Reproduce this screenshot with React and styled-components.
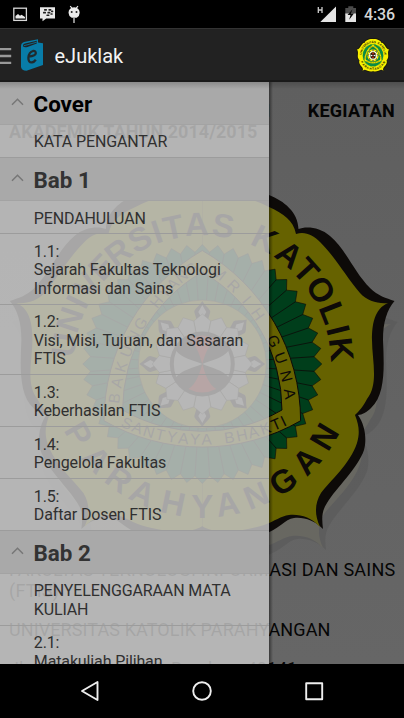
import React from "react";
import styled, { createGlobalStyle } from "styled-components";

const GlobalStyle = createGlobalStyle`
  html, body { margin: 0; padding: 0; background: #000; }
  * { box-sizing: border-box; }
`;

const Screen = styled.div`
  width: 404px;
  height: 718px;
  display: flex;
  flex-direction: column;
  overflow: hidden;
  background: #000;
  font-family: Roboto, "Liberation Sans", sans-serif;
`;

const StatusBar = styled.header`
  height: 28px;
  flex: none;
  display: flex;
  align-items: flex-start;
  justify-content: space-between;
`;

const Clock = styled.span`
  font-size: 16px;
  font-weight: 500;
  line-height: 28px;
  color: #d6d6d6;
  padding: 1px 9px 0 8px;
  letter-spacing: -0.1px;
`;

const StatusGroup = styled.div`
  display: flex;
`;

const AppBar = styled.div`
  height: 54px;
  flex: none;
  display: flex;
  align-items: center;
  background: #222;
  border-top: 1px solid #333;
  border-bottom: 2px solid #1a1a1a;
  padding-right: 14px;
`;

const Title = styled.h1`
  flex: 1;
  margin: 0;
  padding: 3px 0 0 9.5px;
  font-size: 20px;
  font-weight: 400;
  line-height: 24px;
  color: #f3f3f3;
`;

const Content = styled.main`
  position: relative;
  height: 582px;
  flex: none;
  overflow: hidden;
  background: linear-gradient(#5f5f5f, #666);
`;

const Watermark = styled.svg`
  position: absolute;
  left: 0;
  top: 0;
`;

const Document = styled.article`
  position: relative;
  padding: 18px 9px 0;
  color: #050505;
  font-size: 18px;
  line-height: 21px;
`;

const Heading = styled.div`
  font-weight: 700;
  height: 439px;
  letter-spacing: 0.05px;
`;

const HeadingLine = styled.div`
  display: flex;
  justify-content: space-between;
  white-space: nowrap;
  letter-spacing: 0.25px;
`;

const Paragraph = styled.p`
  margin: ${(p) => p.$gap || "20px"} 0 0;
  white-space: nowrap;
  letter-spacing: ${(p) => p.$track || "0"};
`;

const Line = styled.span`
  display: block;
`;

const Drawer = styled.nav`
  position: absolute;
  left: 0;
  top: 0;
  width: 269px;
  height: 582px;
  overflow: hidden;
`;

const DrawerEdge = styled.div`
  position: absolute;
  left: 269px;
  top: 0;
  width: 4px;
  height: 582px;
  background: linear-gradient(90deg, rgba(0, 0, 0, 0.45), rgba(0, 0, 0, 0));
`;

const TopShade = styled.div`
  position: absolute;
  left: 0;
  right: 0;
  top: 0;
  height: 7px;
  background: linear-gradient(rgba(0, 0, 0, 0.18), rgba(0, 0, 0, 0));
`;

const Group = styled.div`
  display: flex;
  align-items: center;
  height: ${(p) => p.$height}px;
  padding: 2px 0 0 10px;
  gap: 8.5px;
  background: #a9a9a9;
  border-bottom: 1px solid #a3a3a3;
  color: ${(p) => (p.$active ? "#000" : "#333")};
  font-size: 22.4px;
  font-weight: 700;
  line-height: 26px;

  svg {
    margin-top: -2px;
  }
`;

const Item = styled.div`
  height: ${(p) => p.$lines * 18.5 + 14.9}px;
  padding: 8.5px 10px 0 33.8px;
  background: rgba(197, 197, 197, 0.84);
  border-bottom: 1px solid #9c9c9c;
  color: #303030;
  font-size: 16px;
  line-height: 18.4px;
  letter-spacing: -0.13px;
  white-space: pre;
`;

const NavBar = styled.footer`
  height: 54px;
  flex: none;
  display: flex;
  justify-content: center;
  align-items: center;
`;

const OUTER =
  "M202 184C230 182 252 186 269 195C284 201 298 212 298.5 229C306 226 320 227 330 236C345 248 354 272 370 288C378 296 386 298 394.5 301C387 310 383 322 383 340C384 365 386 394 371 408C367 412 362 415 358 415C365 425 367 439 364 450C358 468 336 488 327 503C321 512 322 520 323 529C314 520 304 517 294 518C285 519 278 530 264 534C240 542 216 540 202 531Z";
const INNER =
  "M202 194C230 193 252 198 269 207C284 214 293 220 296 234C305 231 313 235 320 242C337 259 346 277 360 293C367 301 378 304 388 303C374 309 372 325 372 340C372 360 379 384 367 399C363 407 359 411 355 415C359 425 360 433 357 443C350 464 330 481 321 493C315 503 314 514 320 527C311 517 300 514 289 515C281 516 275 521 264 525C240 532 216 535 202 526Z";

const CX = 202.3;
const CY = 364;
const rad = (d) => (d * Math.PI) / 180;
const polar = (r, deg, cx = CX, cy = CY) => [
  cx + r * Math.sin(rad(deg)),
  cy - r * Math.cos(rad(deg)),
];

const TEETH = 48;
const gearPoints = Array.from({ length: TEETH * 2 }, (_, i) =>
  polar(i % 2 ? 112 : 119.5, (i * 180) / TEETH).join(",")
).join(" ");

const reuleaux = (r) => {
  const side = r * Math.sqrt(3);
  const [a, b, c] = [0, 120, 240].map((d) => polar(r, d).join(" "));
  return `M${a}A${side} ${side} 0 0 1 ${b}A${side} ${side} 0 0 1 ${c}A${side} ${side} 0 0 1 ${a}Z`;
};

const topLetters = [
  ["U", -82], ["N", -71.5], ["I", -63.5], ["V", -55.5], ["E", -46], ["R", -37],
  ["S", -26.5], ["I", -19], ["T", -12], ["A", -2.3], ["S", 8.6],
  ["K", 26.5], ["A", 38.5], ["T", 48], ["O", 58], ["L", 68.5], ["I", 76], ["K", 84],
];
const bottomLetters = [
  ["N", 120.8], ["A", 132.9], ["G", 145.4], ["N", 157.7], ["A", 169.8], ["Y", 180],
  ["H", 191.8], ["A", 204.8], ["R", 215.9], ["A", 227.8], ["P", 240.5],
];
const LEFT = [104, 421.7];
const RIGHT = [300.7, 421.7];
const TOP = [202.3, 251.7];
const rightMotto = [
  ["M", 52.2], ["R", 46.3], ["I", 40.5], ["H", 35],
  ["G", 25.4], ["U", 19.8], ["N", 14], ["A", 8.5],
];
const leftMotto = [
  ["B", 7.2], ["A", 12], ["K", 17], ["U", 22], ["N", 27], ["G", 31.5],
  ["H", 39.8], ["Y", 43.6], ["A", 47], ["N", 50.7], ["G", 54.4],
];
const bottomMotto = [
  ["S", -23.7], ["A", -20.2], ["N", -16.5], ["T", -12.9], ["Y", -9.3], ["A", -5.8], ["Y", -2.2], ["A", 1.3],
  ["B", 8.3], ["H", 12.2], ["A", 15.8], ["K", 19.6], ["T", 23.1], ["I", 25.6],
];

const Letter = ({ ch, at, turn }) => (
  <text textAnchor="middle" transform={`translate(${at[0]} ${at[1]}) rotate(${turn})`}>{ch}</text>
);

const HalfOutline = ({ outer, inner }) => (
  <>
    <path d={OUTER} fill={outer} />
    <path d={INNER} fill={inner} />
  </>
);

const Outline = (p) => (
  <>
    <HalfOutline {...p} />
    <g transform="translate(404.4 0) scale(-1 1)"><HalfOutline {...p} /></g>
  </>
);

const Emblem = ({ yellow, green, ink, white, red }) => (
  <g>
    <Outline outer={ink} inner={yellow} />
    <polygon points={gearPoints} fill={green} stroke={ink} strokeWidth="0.6" />
    {Array.from({ length: TEETH }, (_, i) => {
      const d = ((i + 0.5) * 360) / TEETH;
      const [x1, y1] = polar(60, d);
      const [x2, y2] = polar(112, d);
      return <line key={i} x1={x1} y1={y1} x2={x2} y2={y2} stroke={ink} strokeWidth="0.8" />;
    })}
    <path
      d={`${reuleaux(113.5)} ${reuleaux(92)}`}
      fillRule="evenodd"
      fill={yellow}
      stroke={ink}
      strokeWidth="1"
    />
    <circle cx={CX} cy={CY} r="64" fill={yellow} stroke={ink} strokeWidth="0.6" />
    {Array.from({ length: 8 }, (_, i) => (
      <g key={i} transform={`translate(${CX} ${CY}) rotate(${i * 45})`}>
        <path d="M0-63C3-58 8-55 8-52L5-42H-5L-8-52C-8-55-3-58 0-63Z" fill={ink} />
        <path d="M0-59L4-52L0-45L-4-52Z" fill={white} />
      </g>
    ))}
    {Array.from({ length: 16 }, (_, i) => (
      <path
        key={i}
        transform={`translate(${CX} ${CY}) rotate(${i * 22.5})`}
        d="M-6-30L-8.5-43L0-50L8.5-43L6-30Z"
        fill={white}
        stroke={ink}
        strokeWidth="0.5"
      />
    ))}
    <circle cx={CX} cy={CY} r="32.5" fill={ink} />
    <g transform={`translate(${CX} ${CY})`}>
      <path d="M0 0C-10-4-20-6-26-13Q-31 0-26 13C-20 6-10 4 0 0C10 4 20 6 26 13Q31 0 26-13C20-6 10-4 0 0Z" fill={white} />
      <path d="M0 0C-3-10-6-20-14-25Q0-32 14-25C6-20 3-10 0 0C3 10 6 20 14 25Q0 32-14 25C-6 20-3 10 0 0Z" fill={red} />
    </g>
    <g fill={ink} fontFamily='"Liberation Sans", Arial, sans-serif'>
      <g fontSize="33" fontWeight="700">
        {topLetters.map(([c, d], i) => <Letter key={i} ch={c} at={polar(128.5, d)} turn={d} />)}
        {bottomLetters.map(([c, d], i) => <Letter key={i} ch={c} at={polar(153.5, d)} turn={d - 180} />)}
      </g>
      <g fontSize="15.5">
        {rightMotto.map(([c, a], i) => <Letter key={i} ch={c} at={polar(182.5, 90 - a, ...LEFT)} turn={90 - a} />)}
        {leftMotto.map(([c, a], i) => <Letter key={i} ch={c} at={polar(182.5, a - 90, ...RIGHT)} turn={a - 90} />)}
        {bottomMotto.map(([c, a], i) => <Letter key={i} ch={c} at={polar(193, 180 - a, ...TOP)} turn={-a} />)}
      </g>
    </g>
  </g>
);

const Chevron = () => (
  <svg width="15" height="12" viewBox="0 0 15 12">
    <path d="M2 7.7L7.5 2.3L13 7.7" fill="none" stroke="#777" strokeWidth="1.5" />
  </svg>
);

const NotificationIcons = () => (
  <svg width="90" height="28" viewBox="0 0 90 28">
    <rect x="13.8" y="8.2" width="12.6" height="12.2" fill="none" stroke="#d8d8d8" strokeWidth="1.3" />
    <path d="M15.5 18.6V16L18 14l2 1.8 1.5-1L25 17v1.6Z" fill="#e8e8e8" />
    <path d="M40 7.2h15v11.2H46.2L42.5 21.2v-2.8H40Z" fill="#e8e8e8" />
    <g fill="#222">
      <rect x="44" y="9" width="3" height="1.7" rx=".6" /><rect x="48.4" y="9" width="3" height="1.7" rx=".6" />
      <rect x="43" y="11.8" width="3" height="1.7" rx=".6" /><rect x="47.4" y="11.8" width="3" height="1.7" rx=".6" />
      <rect x="51" y="10.6" width="2.3" height="1.6" rx=".6" /><rect x="50.4" y="13.2" width="2.3" height="1.6" rx=".6" />
      <rect x="46.4" y="14.5" width="3" height="1.5" rx=".6" />
    </g>
    <path d="M70.2 6.2l2 2.2M78 6.2l-2 2.2M74 18v5" stroke="#e8e8e8" strokeWidth="1.2" />
    <path d="M68.5 12.8a5.6 5.6 0 0 1 11.2 0q0 3-3 5h-5q-3.2-2-3.2-5Z" fill="#ececec" />
    <circle cx="71.7" cy="12" r="1" fill="#222" /><circle cx="76.5" cy="12" r="1" fill="#222" />
  </svg>
);

const SignalIcons = () => (
  <svg width="40" height="28" viewBox="1 0 40 28">
    <path d="M3.3 7v6M7 7v6M3.3 10H7" stroke="#ccc" strokeWidth="1.3" />
    <path d="M21 6.5V22H5.3Z" fill="#e4e4e4" />
    <path d="M30.3 8h3V6.2h5V8h3v7h-11Z" fill="#4b4b4b" />
    <path d="M30.3 13.5h11V22h-11Z" fill="#e4e4e4" />
    <path d="M37.5 9.3L32.5 15h3l-1.3 4.8 4.7-6.2h-3Z" fill="#080808" />
  </svg>
);

const MenuIcon = () => (
  <svg width="20" height="51" viewBox="0 0 20 51">
    <path d="M0 20.2h11.2M0 27h11.2M0 33.8h11.2" stroke="#999" strokeWidth="2.3" />
  </svg>
);

const BookIcon = () => (
  <svg width="25" height="51" viewBox="0 0 25 51">
    <path d="M1 17Q1 14 4 13L18 10.2V13.5L23 14.2V36L6.5 41.7Q1.5 41.5 1 38Z" fill="#087ca8" />
    <path d="M3 17.2Q2.8 15 5 14.6L16.8 11.8V14.5L7.5 18Q4 18.7 3 17.2Z" fill="#222" />
    <path d="M4 16.7L16.8 13.2" stroke="#087ca8" strokeWidth=".8" />
    <path d="M8.6 27.6Q15.5 27.2 15.8 24.2Q15.8 21.7 13 22Q9 23 8.4 28.5Q8.2 33.8 12 33.4Q14.2 33 15.8 30.8" fill="none" stroke="#202a2e" strokeWidth="2.3" />
  </svg>
);

const sections = [
  { title: "Cover", height: 42.5, active: true, items: ["KATA PENGANTAR"] },
  {
    title: "Bab 1",
    height: 43.2,
    items: [
      "PENDAHULUAN",
      "1.1:\nSejarah Fakultas Teknologi\nInformasi dan Sains",
      "1.2:\nVisi, Misi, Tujuan, dan Sasaran\nFTIS",
      "1.3:\nKeberhasilan FTIS",
      "1.4:\nPengelola Fakultas",
      "1.5:\nDaftar Dosen FTIS",
    ],
  },
  { title: "Bab 2", height: 42.8, items: ["PENYELENGGARAAN MATA\nKULIAH", "2.1:\nMatakuliah Pilihan"] },
];

export default function App() {
  return (
    <Screen>
      <GlobalStyle />
      <StatusBar>
        <NotificationIcons />
        <StatusGroup>
          <SignalIcons />
          <Clock>4:36</Clock>
        </StatusGroup>
      </StatusBar>
      <AppBar>
        <MenuIcon />
        <BookIcon />
        <Title>eJuklak</Title>
        <svg width="34" height="34" viewBox="10 183 384 354" preserveAspectRatio="none">
          <Emblem yellow="#f8f000" green="#07924a" ink="#1c1a08" white="#fff" red="#d22" />
        </svg>
      </AppBar>
      <Content>
        <Watermark width="404" height="582" viewBox="0 82 404 582">
          <g transform="translate(3 21)" opacity="0.6">
            <Outline outer="#595959" inner="#6b6a60" />
          </g>
          <Emblem yellow="#666200" green="#003e1b" ink="#0d0a08" white="#707070" red="#700000" />
        </Watermark>
        <Document>
          <Heading>
            <HeadingLine><span>PETUNJUK</span><span>PELAKSANAAN</span><span>KEGIATAN</span></HeadingLine>
            <Line>AKADEMIK TAHUN 2014/2015</Line>
          </Heading>
          <Paragraph $track="0.22px">
            <Line>FAKULTAS TEKNOLOGI INFORMASI DAN SAINS</Line>
            <Line>(FTIS)</Line>
          </Paragraph>
          <Paragraph $track="0.1px" $gap="18px">UNIVERSITAS KATOLIK PARAHYANGAN</Paragraph>
          <Paragraph $gap="18px">Jln. Ciumbuleuit 94, Bandung 40141</Paragraph>
        </Document>
        <DrawerEdge />
        <Drawer>
          {sections.map((s) => (
            <React.Fragment key={s.title}>
              <Group $height={s.height} $active={s.active}>
                <Chevron />
                <span>{s.title}</span>
              </Group>
              {s.items.map((t) => (
                <Item key={t} $lines={t.split("\n").length}>{t}</Item>
              ))}
            </React.Fragment>
          ))}
        </Drawer>
        <TopShade />
      </Content>
      <NavBar>
        <svg width="404" height="54" viewBox="0 0 404 54" fill="none" stroke="#eee" strokeWidth="1.9" strokeLinejoin="round">
          <path d="M82 27L97.5 18V36Z" />
          <circle cx="202" cy="27" r="8.8" />
          <rect x="306.2" y="19.2" width="16" height="16" />
        </svg>
      </NavBar>
    </Screen>
  );
}
